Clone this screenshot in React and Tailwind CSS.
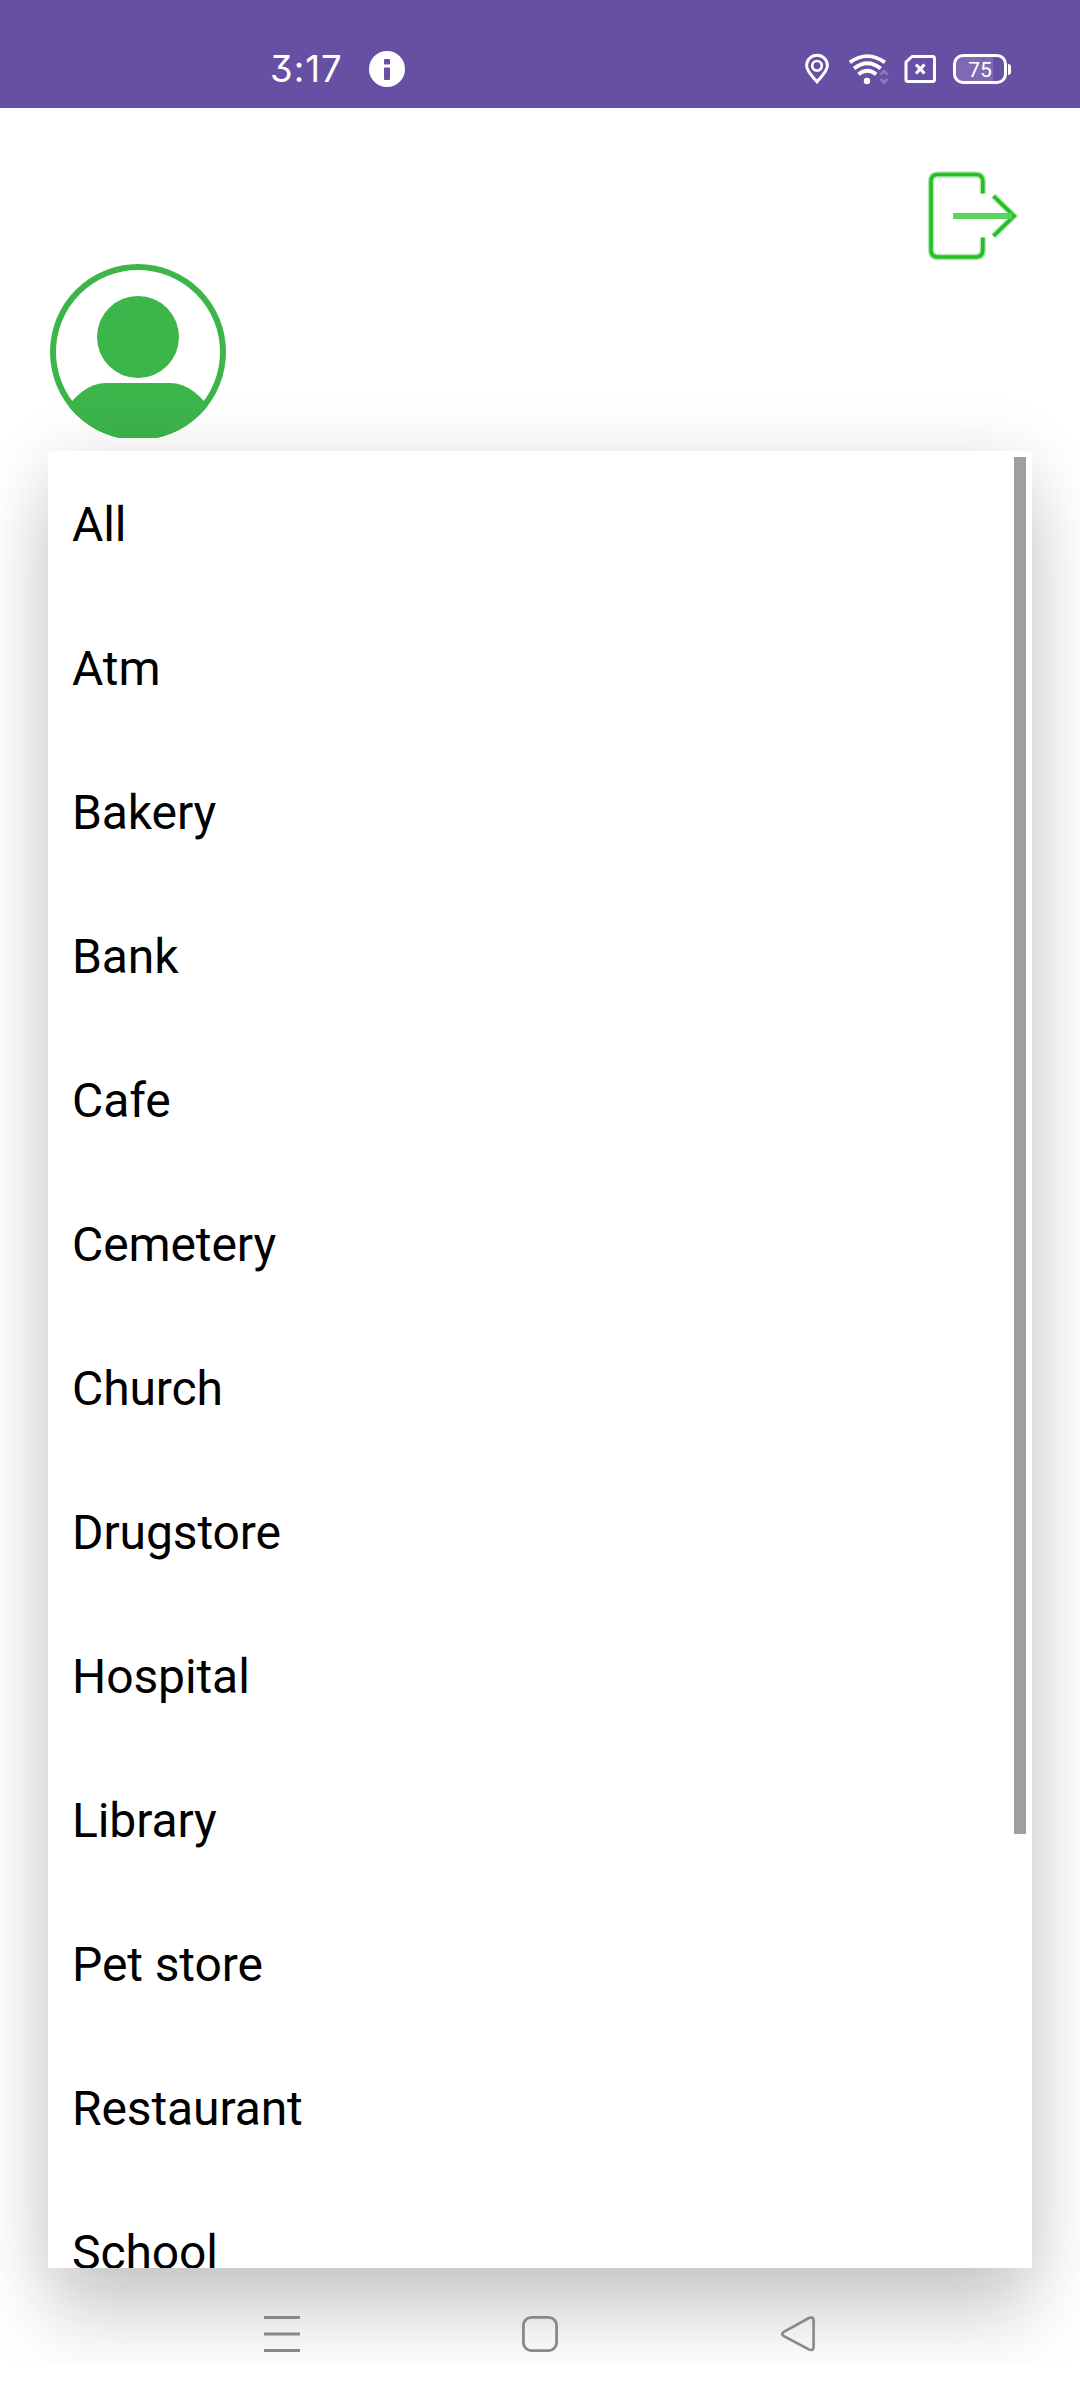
const places = [
  'All', 'Atm', 'Bakery', 'Bank', 'Cafe', 'Cemetery', 'Church',
  'Drugstore', 'Hospital', 'Library', 'Pet store', 'Restaurant', 'School',
];

function StatusBar() {
  return (
    <header className="flex h-[108px] shrink-0 items-start justify-between bg-[#6750a3] pt-[51px] pr-[69px] pl-[270px] text-white">
      <div className="flex h-9 items-center">
        <span className="w-[99px] font-['Inter',sans-serif] text-[36.5px] leading-9 tracking-[1px] [font-feature-settings:'cv09']">3:17</span>
        <svg className="h-9 w-9" viewBox="0 0 36 36">
          <circle cx="18" cy="18" r="18" fill="white" />
          <rect x="15" y="8" width="6" height="5.5" rx="0.8" fill="#6750a3" />
          <rect x="15" y="16.5" width="6" height="12.5" rx="0.8" fill="#6750a3" />
        </svg>
      </div>
      <div className="flex h-9 items-center">
        <svg className="h-9 w-[26px]" viewBox="0 0 26 36" fill="none" stroke="white">
          <path d="M13 30.8C9 26 2.6 20.5 2.6 14.6A10.4 10.4 0 0 1 23.4 14.6C23.4 20.5 17 26 13 30.8Z" strokeWidth="3" />
          <circle cx="13" cy="14.8" r="4.8" strokeWidth="2.7" />
        </svg>
        <svg className="ml-[18px] h-9 w-[42px]" viewBox="0 0 42 36" fill="none" stroke="white" strokeWidth="3.8">
          <path d="M1.8 11.4Q19.3 -1.2 36.9 11.4" />
          <path d="M6 17.5Q19.3 7 32.7 17.5" />
          <path d="M10.5 23.4Q19.3 16 28.2 23.4" />
          <circle cx="19" cy="30" r="3.2" fill="white" stroke="none" />
          <path d="M32.5 23.7L36 20.2L39.5 23.7M32.5 27.8L36 31.3L39.5 27.8" stroke="#8f7bc0" strokeWidth="2.6" />
        </svg>
        <svg className="ml-[13px] h-9 w-[34px]" viewBox="0 0 34 36" fill="none" stroke="white" strokeWidth="3">
          <path d="M9 5.5H29.5Q31.5 5.5 31.5 7.5V28.5Q31.5 30.5 29.5 30.5H5Q3 30.5 3 28.5V11Z" strokeLinejoin="round" />
          <path d="M13 13.5L21.5 22.5M21.5 13.5L13 22.5" strokeWidth="3.2" />
        </svg>
        <div className="ml-[16px] flex items-center">
          <div className="flex h-[30px] w-[54px] items-center justify-center rounded-[10px] border-3 border-white bg-[linear-gradient(90deg,#7f69b3_0_37px,transparent_37px)] pt-[2px] font-['Roboto',sans-serif] text-[21px] leading-none font-normal">
            75
          </div>
          <span className="ml-px h-[11px] w-[3px] rounded-r-sm bg-white" />
        </div>
      </div>
    </header>
  );
}

function ExitIcon() {
  const frame = 'M54.8 21.5V9.5Q54.8 2.5 47.8 2.5H10Q3 2.5 3 9.5V78Q3 85 10 85H47.8Q54.8 85 54.8 78V65.5';
  const head = 'M65.5 24L86 44L65.5 64';
  return (
    <svg className="ml-auto h-[92px] w-[92px] overflow-visible" viewBox="0 0 92 92" fill="none" stroke="#22bf26" strokeWidth="3.6">
      <path d={frame} strokeWidth="6.4" opacity="0.35" />
      <path d={head} strokeWidth="6.4" opacity="0.35" />
      <path d={frame} />
      <path d={head} />
      <path d="M25 44H84" stroke="#5ad35c" strokeWidth="6" />
    </svg>
  );
}

function Avatar() {
  return (
    <svg className="h-[174px] w-[176px]" viewBox="0 0 176 174">
      <clipPath id="avatar-disc"><circle cx="88" cy="88" r="88" /></clipPath>
      <circle cx="88" cy="88" r="85" fill="none" stroke="#3cb54b" strokeWidth="6" />
      <circle cx="88" cy="73" r="41" fill="#3cb54b" />
      <path clipPath="url(#avatar-disc)" d="M10 154Q31 119 56 119H120Q145 119 166 154V175H10Z" fill="#3cb54b" />
    </svg>
  );
}

function NavigationBar() {
  return (
    <nav className="relative flex h-[96px] items-start justify-between px-[263px] pt-[47px]">
      <svg className="h-[38px] w-[38px]" viewBox="0 0 38 38" stroke="#888" strokeWidth="3">
        <path d="M1 2.5H37M1 19H37M1 35.5H37" />
      </svg>
      <svg className="h-[38px] w-[38px]" viewBox="0 0 38 38" fill="none" stroke="#888" strokeWidth="2.8">
        <rect x="2.4" y="2.4" width="33.2" height="33.2" rx="8" />
      </svg>
      <svg className="h-[38px] w-[38px]" viewBox="0 0 38 38" fill="none" stroke="#888" strokeWidth="2.6">
        <path d="M4.4 17.2L29.8 3Q34.6 1.2 34.6 5.5V32Q34.6 36.3 29.8 34.4L4.4 20.8Q2 19 4.4 17.2Z" />
      </svg>
    </nav>
  );
}

export default function App() {
  return (
    <div className="h-[2400px] w-[1080px] overflow-hidden bg-white">
      <div className="flex h-[2364px] flex-col overflow-hidden">
        <StatusBar />
        <div className="ml-auto h-[156px] shrink-0 pt-[64px] pr-[60px]">
          <ExitIcon />
        </div>
        <div className="h-[187px] shrink-0 pl-[50px]">
          <Avatar />
        </div>
        <main className="mx-12 flex h-[1817px] shrink-0 justify-between bg-white shadow-[0_50px_70px_rgba(0,0,0,0.18),0_0_64px_rgba(0,0,0,0.09)]">
          <ul className="h-full flex-1 overflow-hidden pt-[2px] pl-6 font-['Roboto',sans-serif] text-[48px] leading-[144px] tracking-[-0.1px] text-black">
            {places.map((place) => <li key={place} className="h-36">{place}</li>)}
          </ul>
          <div className="mt-[6px] mr-[6px] h-[1377px] w-3 bg-[#a09ea3]" />
        </main>
        <NavigationBar />
      </div>
    </div>
  );
}
